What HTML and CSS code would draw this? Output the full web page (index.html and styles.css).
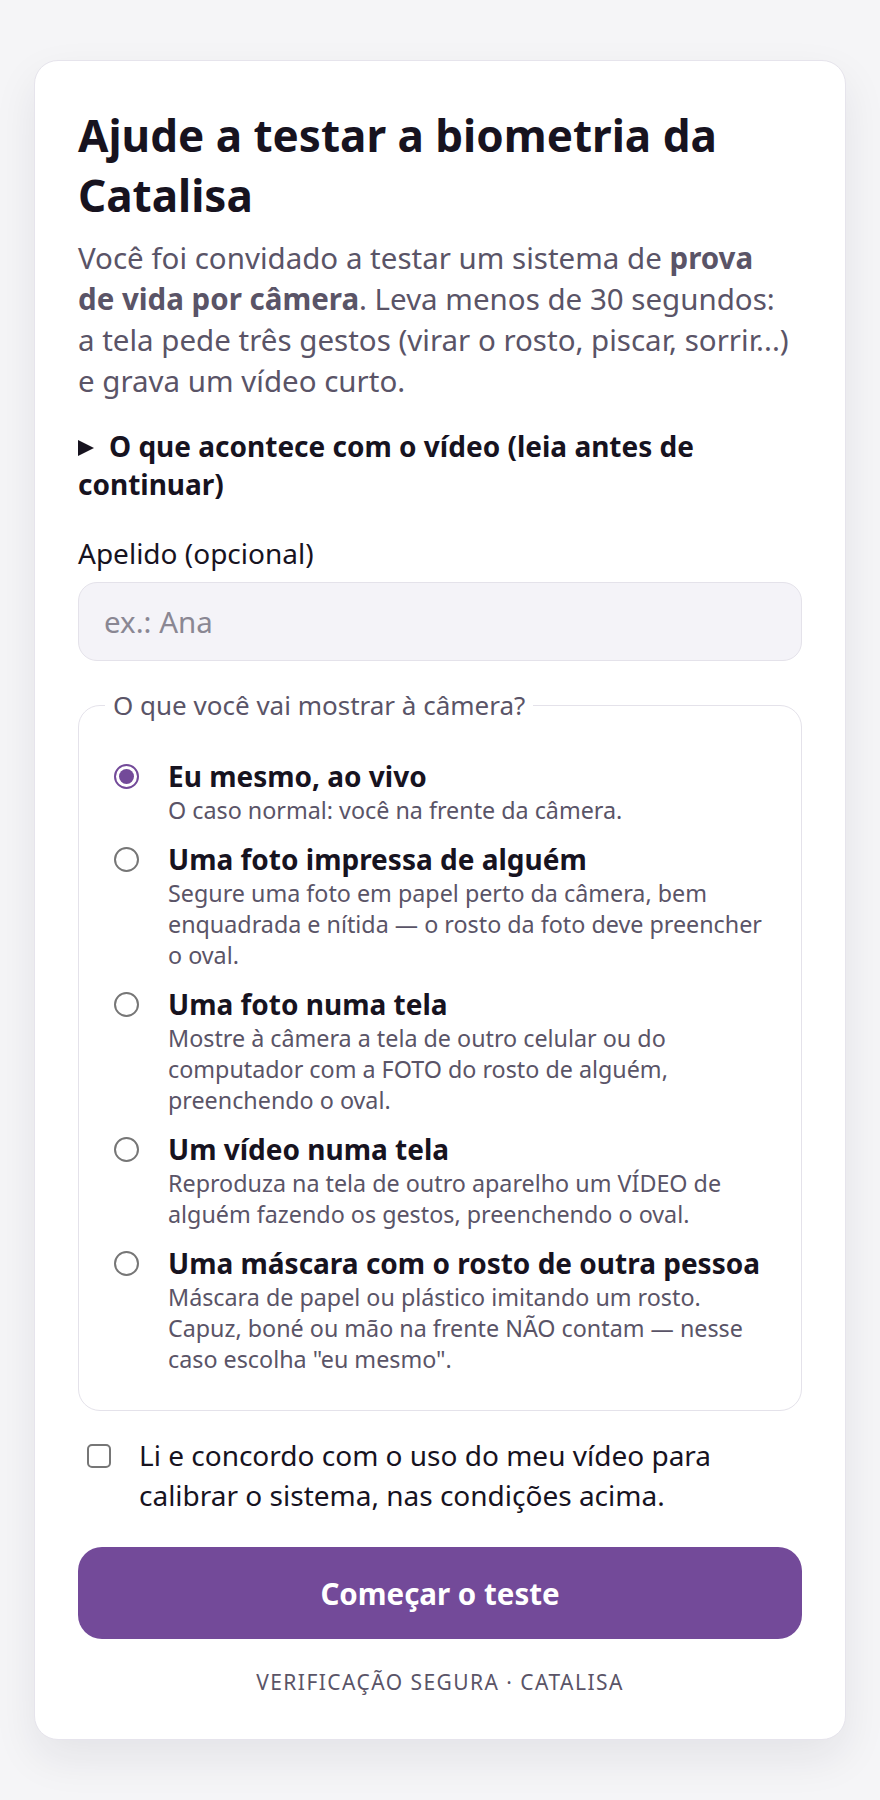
FILE: index.html
```html
<!DOCTYPE html>
<html lang="pt-BR">
<head>
<meta charset="utf-8">
<title>Ajude a testar a biometria da Catalisa</title>
<link rel="stylesheet" href="styles.css">
</head>
<body>
<main class="card">
  <h1 class="title">Ajude a testar a biometria da Catalisa</h1>
  <p class="intro">Você foi convidado a testar um sistema de <strong>prova<br>de vida por câmera</strong>. Leva menos de 30 segundos:<br>a tela pede três gestos (virar o rosto, piscar, sorrir...) e grava um vídeo curto.</p>

  <details class="info">
    <summary class="info-summary"><span class="tri"></span>O que acontece com o vídeo (leia antes de continuar)</summary>
  </details>

  <label class="field-label" for="nick">Apelido (opcional)</label>
  <input class="text-input" id="nick" type="text" placeholder="ex.: Ana">

  <fieldset class="choices">
    <legend class="choices-legend">O que você vai mostrar à câmera?</legend>
    <div class="options">
      <label class="option">
        <input class="radio" type="radio" name="kind" checked>
        <span class="option-text">
          <span class="option-title">Eu mesmo, ao vivo</span>
          <span class="option-desc">O caso normal: você na frente da câmera.</span>
        </span>
      </label>
      <label class="option">
        <input class="radio" type="radio" name="kind">
        <span class="option-text">
          <span class="option-title">Uma foto impressa de alguém</span>
          <span class="option-desc">Segure uma foto em papel perto da câmera, bem enquadrada e nítida — o rosto da foto deve preencher o oval.</span>
        </span>
      </label>
      <label class="option">
        <input class="radio" type="radio" name="kind">
        <span class="option-text">
          <span class="option-title">Uma foto numa tela</span>
          <span class="option-desc">Mostre à câmera a tela de outro celular ou do computador com a FOTO do rosto de alguém, preenchendo o oval.</span>
        </span>
      </label>
      <label class="option">
        <input class="radio" type="radio" name="kind">
        <span class="option-text">
          <span class="option-title">Um vídeo numa tela</span>
          <span class="option-desc">Reproduza na tela de outro aparelho um VÍDEO de alguém fazendo os gestos, preenchendo o oval.</span>
        </span>
      </label>
      <label class="option">
        <input class="radio" type="radio" name="kind">
        <span class="option-text">
          <span class="option-title">Uma máscara com o rosto de outra pessoa</span>
          <span class="option-desc">Máscara de papel ou plástico imitando um rosto. Capuz, boné ou mão na frente NÃO contam — nesse caso escolha "eu mesmo".</span>
        </span>
      </label>
    </div>
  </fieldset>

  <label class="consent">
    <input class="checkbox" type="checkbox">
    <span class="consent-text">Li e concordo com o uso do meu vídeo para calibrar o sistema, nas condições acima.</span>
  </label>

  <button class="start-btn" type="button">Começar o teste</button>

  <p class="footer">Verificação segura · Catalisa</p>
</main>
</body>
</html>
```

FILE: styles.css
```css
* {
  box-sizing: border-box;
}

html, body {
  margin: 0;
  background: #f5f5f7;
}

body {
  padding: 60px 34px 60px;
  font-family: "Noto Sans", "Open Sans", sans-serif;
  color: #17131f;
}

.card {
  background: #ffffff;
  border: 1px solid #e6e4ec;
  border-radius: 24px;
  padding: 44px 43px 42px;
  box-shadow: 0 18px 44px rgba(30, 20, 50, 0.08);
  display: flex;
  flex-direction: column;
}

.title {
  margin: 0 0 12px;
  font-size: 44px;
  line-height: 60px;
  font-weight: 700;
  color: #17131f;
}

.intro {
  margin: 0 0 26px;
  font-size: 29.5px;
  line-height: 41px;
  color: #5a5467;
}

.intro strong {
  font-weight: 700;
}

.info {
  margin: 0 0 31px;
}

.info-summary {
  list-style: none;
  font-size: 28px;
  line-height: 38px;
  font-weight: 700;
  color: #17131f;
  cursor: pointer;
}

.info-summary::-webkit-details-marker {
  display: none;
}

.tri {
  display: inline-block;
  width: 0;
  height: 0;
  border-left: 16px solid #17131f;
  border-top: 8px solid transparent;
  border-bottom: 8px solid transparent;
  margin-right: 15px;
  vertical-align: 1px;
}

.field-label {
  display: block;
  font-size: 28px;
  line-height: 39px;
  color: #17131f;
  margin-bottom: 9px;
}

.text-input {
  display: block;
  width: 100%;
  height: 79px;
  border: 1px solid #e4e2ea;
  background: #f4f3f8;
  border-radius: 19px;
  padding: 0 25px;
  font-family: inherit;
  font-size: 29.5px;
  color: #17131f;
}

.text-input::placeholder {
  color: #8a8793;
}

.choices {
  margin: 26px 0 0;
  border: 1px solid #e4e2ea;
  border-radius: 22px;
  padding: 35px 34px 35px 35px;
  min-inline-size: auto;
}

.choices-legend {
  font-size: 26px;
  line-height: 36px;
  color: #5a5467;
  padding: 0 8px;
  margin-left: -9px;
}

.options {
  display: flex;
  flex-direction: column;
  gap: 15px;
}

.option {
  display: grid;
  grid-template-columns: 25px 1fr;
  column-gap: 29px;
  cursor: pointer;
}

.radio {
  appearance: none;
  -webkit-appearance: none;
  width: 25px;
  height: 25px;
  margin: 6px 0 0;
  border: 2px solid #767676;
  border-radius: 50%;
  background: #fff;
  position: relative;
}

.radio:checked {
  border: 2.5px solid #734a99;
}

.radio:checked::after {
  content: "";
  position: absolute;
  inset: 3px;
  border-radius: 50%;
  background: #734a99;
}

.option-text {
  display: flex;
  flex-direction: column;
}

.option-title {
  font-size: 28px;
  line-height: 37px;
  font-weight: 700;
  color: #17131f;
}

.option-desc {
  font-size: 23.3px;
  line-height: 31px;
  color: #5a5467;
}

.consent {
  margin-top: 24px;
  display: flex;
  align-items: flex-start;
  gap: 28px;
  cursor: pointer;
}

.checkbox {
  appearance: none;
  -webkit-appearance: none;
  flex: 0 0 24px;
  width: 24px;
  height: 24px;
  margin: 9px 0 0 9px;
  border: 2px solid #767676;
  border-radius: 5px;
  background: #fff;
}

.consent-text {
  font-size: 28px;
  line-height: 40px;
  color: #17131f;
}

.start-btn {
  margin-top: 32px;
  width: 100%;
  height: 92px;
  border: none;
  border-radius: 24px;
  background: #734a99;
  color: #ffffff;
  font-family: inherit;
  font-size: 29.5px;
  font-weight: 700;
  cursor: pointer;
}

.footer {
  margin: 28px 0 0;
  text-align: center;
  font-size: 21px;
  line-height: 30px;
  letter-spacing: 1.45px;
  text-transform: uppercase;
  color: #5a5467;
}
```
